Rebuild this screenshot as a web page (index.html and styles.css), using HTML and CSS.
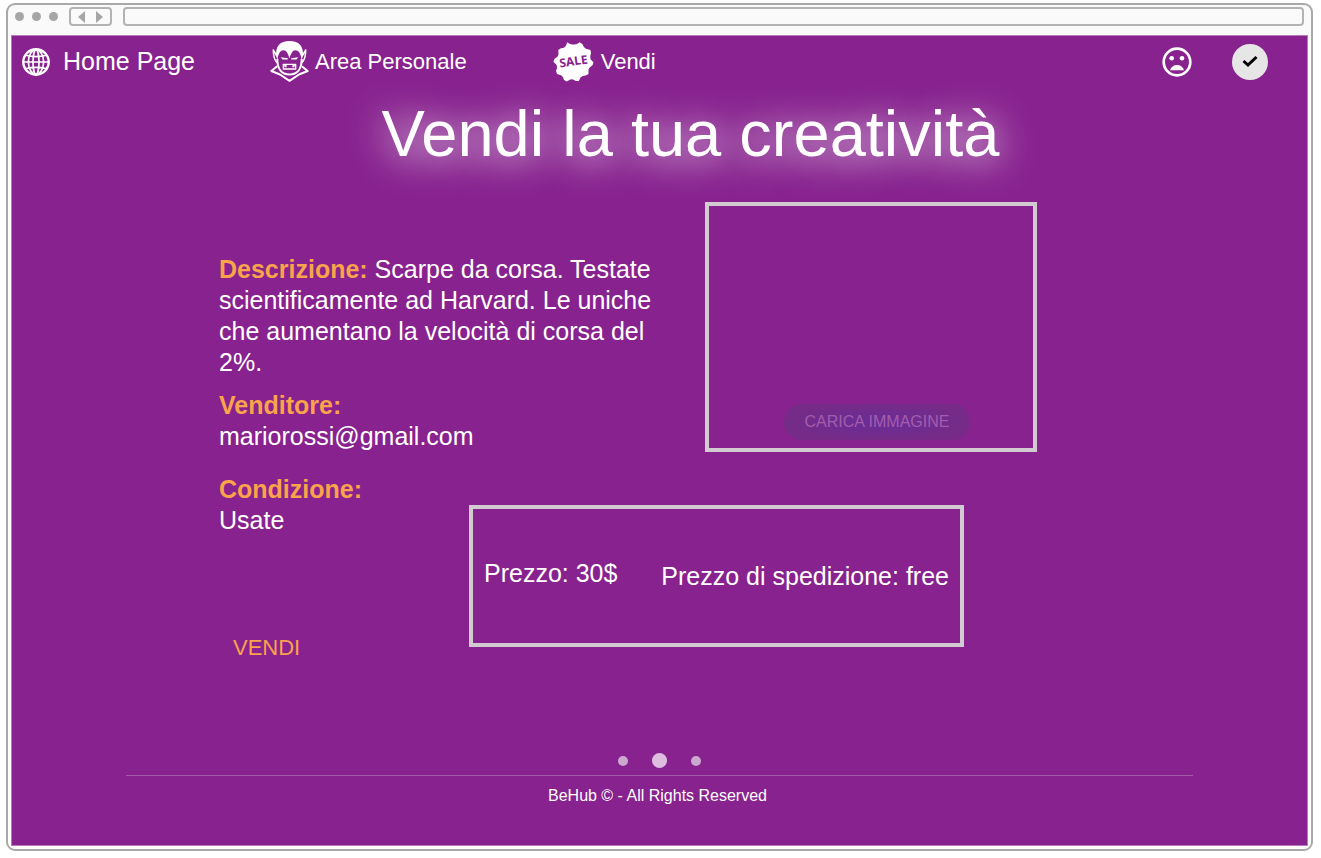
FILE: index.html
```html
<!DOCTYPE html>
<html lang="it">
<head>
<meta charset="utf-8">
<meta name="viewport" content="width=device-width, initial-scale=1">
<title>BeHub - Vendi</title>
<link rel="stylesheet" href="styles.css">
</head>
<body>
<div class="browser">
  <div class="toolbar">
    <div class="lights"><span class="light"></span><span class="light"></span><span class="light"></span></div>
    <div class="history">
      <button class="history-btn" type="button" aria-label="Indietro"><svg width="8" height="12" viewBox="0 0 8 12"><path d="M7 0v12L0 6z" fill="#a6a6a6"/></svg></button>
      <button class="history-btn" type="button" aria-label="Avanti"><svg width="8" height="12" viewBox="0 0 8 12"><path d="M1 0v12l7-6z" fill="#a6a6a6"/></svg></button>
    </div>
    <input class="address" type="text" aria-label="Indirizzo">
  </div>

  <div class="page">
    <nav class="nav">
      <a class="nav-link nav-home" href="#">
        <svg width="28" height="28" viewBox="0 0 28 28" fill="none" stroke="#fff">
          <circle cx="14" cy="14" r="12.7" stroke-width="2.4"/>
          <g stroke-width="1.7"><ellipse cx="14" cy="14" rx="7.6" ry="12.4"/><ellipse cx="14" cy="14" rx="3" ry="12.4"/><path d="M1.5 14h25M3.6 7.3q10.4 2.8 20.8 0M3.6 20.7q10.4-2.8 20.8 0"/></g>
        </svg>
        <span>Home Page</span>
      </a>
      <a class="nav-link nav-area" href="#">
        <svg width="39" height="41" viewBox="0 0 39 41">
          <path d="M6 15C5.500 5 10 0 19.500 0S33.500 5 33 15L31.500 19C31 13.500 29 9.300 25.500 9.300 22.500 9.300 21 12.500 19.500 17.500 18 12.500 16.500 9.300 13.500 9.300 10 9.300 8 13.500 7.500 19z" fill="#fff"/>
          <g fill="none" stroke="#fff" stroke-linejoin="round">
            <path d="M6.500 14.500L3.300 9c0 5 .7 10 4 12.800M32.500 14.500L35.700 9c0 5-.7 10-4 12.800" stroke-width="1.500"/>
            <path d="M7.300 18C7.300 27.500 11.500 33.500 19.500 33.500S31.700 27.500 31.700 18" stroke-width="2"/>
            <path d="M13.300 23.300h12.400v4.700h-12.400z" stroke-width="1.300"/>
            <path d="M7.200 25.300L1.300 30 10 33.500l9.500 6.300L29 33.500 37.700 30l-5.900-4.700" stroke-width="2"/>
          </g>
          <path d="M10.800 16.200L17.800 17.200v1.300h-5.300zM28.200 16.200L21.200 17.200v1.300h5.300zM14 23.500h2.600v2.700h-2zM22.400 23.500H25l-.6 2.700h-2z" fill="#fff"/>
        </svg>
        <span>Area Personale</span>
      </a>
      <a class="nav-link nav-sell" href="#">
        <svg width="41" height="41" viewBox="0 0 41 41">
          <path d="M14.300 1.300Q17.500 4 20.500 3.500 23.500 4 26.700 1.300L29.300 3Q30.500 6.500 33 7.800L37.500 9 38 12.200Q36.500 15.500 37.500 18.200L40.500 21.200 39.500 24.200Q36.300 26 35.500 28.500L35.500 33 32.700 34.500Q29.300 34.500 27.500 36.500L25.800 40 22.700 40Q20 37.700 17.300 38.500L13.800 40.500 11 39Q10.300 35.500 8 34.200L4 33 3 29.800Q4.800 26.500 3.600 24L.5 20.800 1.500 17.800Q5 16.300 5.500 13.500L5.300 9 8 7.300Q11.500 7.300 12.800 5z" fill="#fff"/>
          <text class="sale-text" x="20.500" y="24.500" text-anchor="middle" transform="rotate(-8 20.500 20.500)">SALE</text>
        </svg>
        <span>Vendi</span>
      </a>
      <div class="nav-actions">
        <button class="icon-btn" type="button" aria-label="Segnala un problema">
          <svg width="30" height="30" viewBox="0 0 30 30"><circle cx="15" cy="15" r="13.300" fill="none" stroke="#fff" stroke-width="2.700"/><circle cx="9.700" cy="11.300" r="2.300" fill="#fff"/><circle cx="20" cy="11.300" r="2.300" fill="#fff"/><path d="M8 23.200C9 20 11.500 18 15 18S21 20 22 23.200z" fill="#fff"/></svg>
        </button>
        <button class="icon-btn check-btn" type="button" aria-label="Conferma">
          <svg width="16" height="13" viewBox="0 0 16 13"><path d="M1.500 6L6 10 14.500 2" fill="none" stroke="#000" stroke-width="3"/></svg>
        </button>
      </div>
    </nav>

    <h1 class="title">Vendi la tua creatività</h1>

    <main class="listing">
      <section class="details">
        <p class="field"><strong>Descrizione:</strong> Scarpe da corsa. Testate scientificamente ad Harvard. Le uniche che aumentano la velocità di corsa del 2%.</p>
        <p class="field"><strong>Venditore:</strong><br>mariorossi@gmail.com</p>
      </section>
      <section class="upload"><button class="upload-btn" type="button">CARICA IMMAGINE</button></section>
      <section class="sale">
        <p class="field"><strong>Condizione:</strong><br>Usate</p>
        <button class="sell-btn" type="button">VENDI</button>
      </section>
      <section class="prices"><span class="price">Prezzo: 30$</span><span class="shipping">Prezzo di spedizione: free</span></section>
    </main>

    <footer class="footer">
      <div class="dots">
        <button class="dot" type="button" aria-label="Passo 1"></button>
        <button class="dot dot-active" type="button" aria-label="Passo 2"></button>
        <button class="dot" type="button" aria-label="Passo 3"></button>
      </div>
      <p class="copyright">BeHub © - All Rights Reserved</p>
    </footer>
  </div>
</div>
</body>
</html>
```
FILE: styles.css
```css
* { box-sizing: border-box; }
body {
  margin: 0;
  padding: 3px 8px 7px 6px;
  min-height: 100vh;
  display: flex;
  background: #fff;
  color: #fff;
  font-family: "Liberation Sans", Arial, sans-serif;
  font-size: 25px;
  line-height: 31px;
}
p, h1 { margin: 0; }
button { margin: 0; padding: 0; border: 0; background: none; color: inherit; font: inherit; cursor: pointer; }
svg { display: block; flex: none; }

.browser {
  flex: 1;
  display: flex;
  flex-direction: column;
  padding: 0 3px 3px;
  border: 2px solid #a9a9a9;
  border-radius: 9px;
  background: linear-gradient(#fafafa 31px, #fff 31px);
}
.toolbar { display: flex; align-items: center; height: 30px; padding: 2px 0 9px 4px; }
.lights { display: flex; gap: 8px; width: 54px; }
.light { width: 9px; height: 9px; border-radius: 50%; background: #a6a6a6; }
.history {
  display: flex;
  align-items: center;
  justify-content: center;
  gap: 9px;
  width: 43px;
  height: 19px;
  margin-right: 11px;
  border: 2px solid #b3b3b3;
  border-radius: 4px;
}
.address {
  flex: 1;
  min-width: 0;
  height: 19px;
  margin-right: 4px;
  padding: 0 6px;
  border: 2px solid #b3b3b3;
  border-radius: 4px;
  background: #fafafa;
  font: 12px "Liberation Sans", Arial, sans-serif;
}

.page {
  flex: 1;
  display: flex;
  flex-direction: column;
  border: 1px solid #b87abc;
  background: #88228f;
}
.nav { display: flex; align-items: center; height: 51px; padding: 0 39px 0 10px; }
.nav-link { display: flex; align-items: center; color: #fff; text-decoration: none; font-size: 22px; }
.nav-home { gap: 13px; margin-right: 75px; font-size: 25px; }
.nav-area { gap: 6px; margin-right: 86px; }
.nav-sell { gap: 7px; }
.sale-text { fill: #88228f; font: bold 12px "Noto Sans", "Open Sans", sans-serif; }
.nav-actions { display: flex; align-items: center; gap: 40px; margin-left: auto; }
.check-btn {
  display: flex;
  align-items: center;
  justify-content: center;
  width: 36px;
  height: 36px;
  border-radius: 50%;
  background: #e6e6e6;
}

.title {
  padding-left: 62px;
  text-align: center;
  font-size: 65px;
  font-weight: 400;
  line-height: 94px;
  text-shadow: 0 4px 40px #fff, 0 4px 30px rgba(255, 255, 255, 0.2);
}

.listing {
  display: grid;
  grid-template-columns: 250fr 236fr 259fr 73fr;
  padding: 21px 270px 0 207px;
}
.field strong { color: #f9a34b; }
.details {
  grid-area: 1 / 1 / 2 / 3;
  display: flex;
  flex-direction: column;
  gap: 12px;
  padding: 52px 46px 22px 0;
}
.upload {
  grid-area: 1 / 3 / 2 / 5;
  display: flex;
  align-items: flex-end;
  justify-content: center;
  min-height: 250px;
  margin-bottom: 22px;
  padding: 0 0 8px 12px;
  border: 4px solid #d2ccd2;
}
.upload-btn {
  padding: 0 21px;
  border-radius: 18px;
  background: radial-gradient(#692d99, #752b87 70%);
  color: #a45cab;
  font-size: 16px;
  line-height: 36px;
}
.sale {
  grid-area: 2 / 1 / 3 / 2;
  display: flex;
  flex-direction: column;
  align-items: flex-start;
  gap: 96px;
}
.sell-btn { margin-left: 14px; color: #f9a34b; font-size: 22px; }
.prices {
  grid-area: 2 / 2 / 3 / 4;
  display: flex;
  align-items: center;
  justify-content: space-between;
  height: 142px;
  margin-top: 31px;
  padding: 0 11px;
  border: 4px solid #d2ccd2;
  white-space: nowrap;
}
.price { padding-bottom: 6px; }

.footer { margin: auto 114px 0; padding-bottom: 34px; }
.dots {
  display: flex;
  align-items: center;
  justify-content: center;
  gap: 24px;
  padding-bottom: 7px;
  border-bottom: 1px solid #a55bab;
}
.dot { width: 10px; height: 10px; border-radius: 50%; background: #cba8d0; }
.dot-active { width: 15px; height: 15px; background: #debde1; }
.copyright { padding: 4px 4px 0 0; text-align: center; font-size: 16px; }
```
